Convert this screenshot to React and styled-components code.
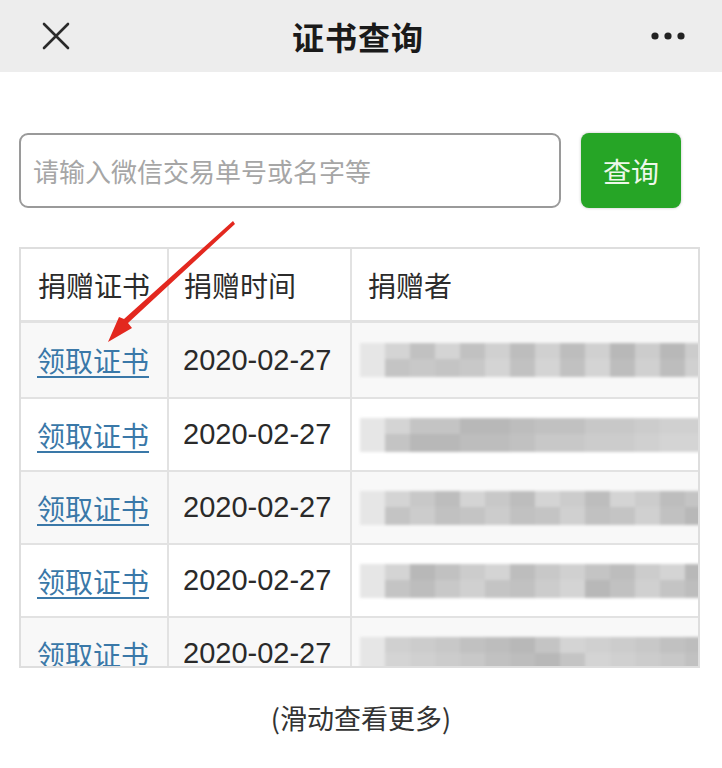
import React from 'react';
import styled, { createGlobalStyle } from 'styled-components';

const GlobalStyle = createGlobalStyle`
  body {
    margin: 0;
    background: #ffffff;
    font-family: 'Noto Sans CJK SC', 'Liberation Sans', sans-serif;
    color: #333333;
  }
`;

const Page = styled.div`
  position: relative;
  width: 722px;
  height: 768px;
  overflow: hidden;
  background: #ffffff;
`;

const NavBar = styled.div`
  height: 72px;
  background: #ededed;
  display: flex;
  align-items: center;
  justify-content: space-between;
  padding: 0 36px 0 38px;
`;

const Title = styled.div`
  font-size: 32px;
  font-weight: 700;
  color: #1a1a1a;
  letter-spacing: 1px;
  margin-left: -8px;
`;

const IconBox = styled.div`
  width: 36px;
  height: 36px;
  display: flex;
  align-items: center;
  justify-content: center;
`;

const SearchRow = styled.div`
  display: flex;
  gap: 20px;
  margin-top: 61px;
  padding: 0 19px;
`;

const SearchInput = styled.input`
  box-sizing: border-box;
  width: 542px;
  height: 75px;
  border: 2px solid #9a9a9a;
  border-radius: 9px;
  padding: 0 12px;
  font-family: 'Noto Sans CJK SC', sans-serif;
  font-size: 26px;
  color: #333;
  outline: none;
  &::placeholder {
    color: #a6a6a6;
  }
`;

const SearchButton = styled.button`
  width: 100px;
  height: 75px;
  border: none;
  border-radius: 8px;
  background: #26a526;
  color: #eef8ea;
  font-family: 'Noto Sans CJK SC', sans-serif;
  font-size: 28px;
  box-shadow: 0 0 3px rgba(0, 0, 0, 0.25);
`;

const TableWrap = styled.div`
  margin: 39px 22px 0 19px;
  height: 421px;
  overflow: hidden;
  border: 2px solid #dedede;
  box-sizing: border-box;
`;

const Table = styled.div`
  display: grid;
  grid-template-columns: 148px 183px 360px;
  grid-template-rows: 74px 76px repeat(4, 73px);
`;

const Cell = styled.div`
  box-sizing: border-box;
  display: flex;
  align-items: center;
  padding-left: ${(p) => p.$pad || 16}px;
  border-right: 2px solid #e2e2e2;
  border-bottom: 2px solid #e2e2e2;
  background: ${(p) => (p.$striped ? '#f8f8f8' : '#ffffff')};
  font-size: 27px;
  color: #2b2b2b;
  white-space: nowrap;
  overflow: hidden;
`;

const HeadCell = styled(Cell)`
  border-bottom-width: 3px;
  font-size: 28px;
`;

const DateText = styled.span`
  font-family: 'Liberation Sans', 'Noto Sans CJK SC', sans-serif;
  font-size: 29px;
  color: #2a2a2a;
`;

const Link = styled.a`
  color: #3a78a8;
  font-size: 28px;
  text-decoration: underline;
  text-underline-offset: 4px;
  text-decoration-thickness: 2px;
`;

const Blur = styled.div`
  display: flex;
  flex-direction: column;
  width: 350px;
  filter: blur(1.5px);
`;

const PixelRow = styled.div`
  display: flex;
  height: ${(p) => p.$h}px;
`;

const Pixel = styled.div`
  width: 26px;
  height: 100%;
  background: ${(p) => p.$c};
`;

const Footer = styled.div`
  text-align: center;
  margin-top: 30px;
  font-size: 27px;
  color: #333;
`;

const Arrow = styled.svg`
  position: absolute;
  left: 0;
  top: 0;
  pointer-events: none;
`;

const shades = ['#c4c4c4', '#cccccc', '#bdbdbd', '#d4d4d4', '#c8c8c8', '#b8b8b8', '#d0d0d0', '#c1c1c1'];

const pixelRows = (seed) => {
  const rows = [];
  for (let r = 0; r < 2; r++) {
    const cells = [];
    for (let i = 0; i < 14; i++) {
      const k = (seed * 7 + r * 5 + i * 3 + ((i * seed) % 5)) % shades.length;
      cells.push(i === 0 ? '#e6e6e6' : shades[k]);
    }
    rows.push(cells);
  }
  return rows;
};

const CloseIcon = () => (
  <svg width="30" height="30" viewBox="0 0 30 30">
    <path d="M3 3 L27 27 M27 3 L3 27" stroke="#2a2a2a" strokeWidth="2.6" strokeLinecap="round" />
  </svg>
);

const MoreIcon = () => (
  <svg width="36" height="10" viewBox="0 0 36 10">
    <circle cx="5" cy="5" r="3.6" fill="#222" />
    <circle cx="18" cy="5" r="3.6" fill="#222" />
    <circle cx="31" cy="5" r="3.6" fill="#222" />
  </svg>
);

const rows = [0, 1, 2, 3, 4];

export default function App() {
  return (
    <Page>
      <GlobalStyle />
      <NavBar>
        <IconBox><CloseIcon /></IconBox>
        <Title>证书查询</Title>
        <IconBox><MoreIcon /></IconBox>
      </NavBar>

      <SearchRow>
        <SearchInput placeholder="请输入微信交易单号或名字等" />
        <SearchButton>查询</SearchButton>
      </SearchRow>

      <TableWrap>
        <Table>
          <HeadCell $pad={17}>捐赠证书</HeadCell>
          <HeadCell $pad={15}>捐赠时间</HeadCell>
          <HeadCell $pad={16}>捐赠者</HeadCell>
          {rows.map((i) => {
            const striped = i % 2 === 0;
            return (
              <React.Fragment key={i}>
                <Cell $pad={16} $striped={striped}>
                  <Link href="#">领取证书</Link>
                </Cell>
                <Cell $pad={14} $striped={striped}>
                  <DateText>2020-02-27</DateText>
                </Cell>
                <Cell $pad={8} $striped={striped}>
                  <Blur>
                    {pixelRows(i + 1).map((cells, r) => (
                      <PixelRow key={r} $h={r === 0 ? 16 : 18}>
                        {cells.map((c, j) => (
                          <Pixel key={j} $c={c} />
                        ))}
                      </PixelRow>
                    ))}
                  </Blur>
                </Cell>
              </React.Fragment>
            );
          })}
        </Table>
      </TableWrap>

      <Footer>(滑动查看更多)</Footer>

      <Arrow width="722" height="768" viewBox="0 0 722 768">
        <polygon points="233,221 235,224 128,323 132,328 108,342 119,317 124,319" fill="#e3281f" />
      </Arrow>
    </Page>
  );
}
